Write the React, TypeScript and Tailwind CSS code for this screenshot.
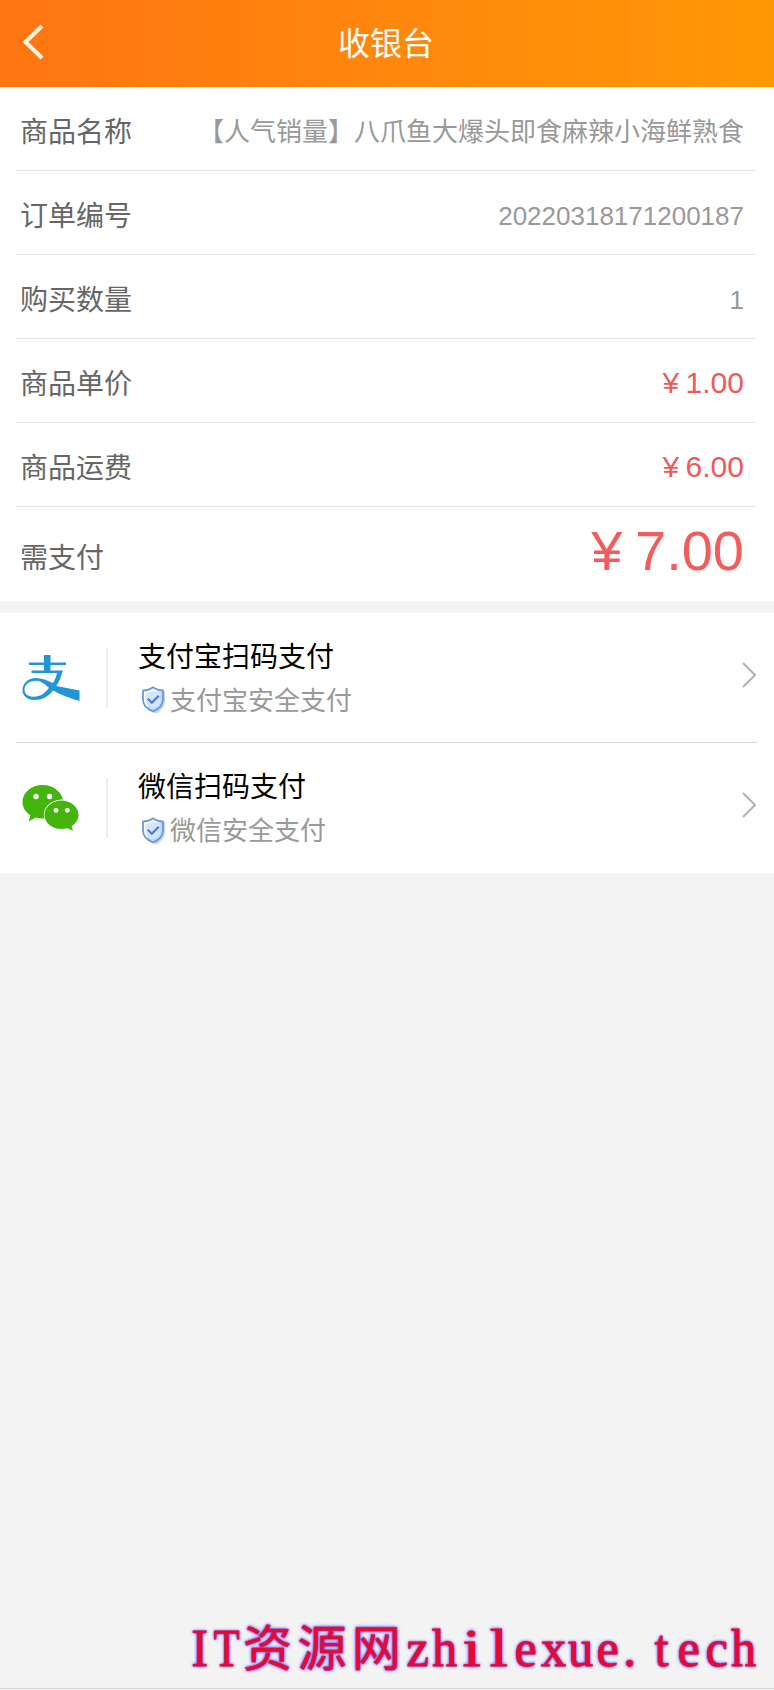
import clsx from 'clsx'

const details = [
  { label: '商品名称', value: '【人气销量】八爪鱼大爆头即食麻辣小海鲜熟食' },
  { label: '订单编号', value: '20220318171200187' },
  { label: '购买数量', value: '1' },
  { label: '商品单价', value: '¥ 1.00', isPrice: true },
  { label: '商品运费', value: '¥ 6.00', isPrice: true },
]

const methods = [
  { id: 'alipay', title: '支付宝扫码支付', note: '支付宝安全支付', Logo: AlipayLogo },
  { id: 'wechat', title: '微信扫码支付', note: '微信安全支付', Logo: WechatLogo },
]

function AlipayLogo() {
  return (
    <svg width="58" height="48" viewBox="0 0 58 48" fill="#2196d3">
      <path d="M22 1h6.500v7.500h15.500v2.500H28.500v5.500H41l-3 8.500c-1 2.500-2.200 4.800-3.700 6.900L57.500 36.500V47c-10-2.500-19-6.500-26.500-10.500C26 43 19.500 46 12.500 46 5 46 .5 41.500.5 36c0-7 6-12 13-12 6.500 0 12 2.500 17.500 5 2.200-3.500 3.300-6.500 4-10H9.500V16.500H22V11H7V8.500h15zM14 26.700c-7 0-11.500 4-11.500 9 0 4.500 4 7 9.500 7 6.500 0 11.500-4 15-9-4-3.500-8-7-13-7z" />
    </svg>
  )
}

function WechatLogo() {
  return (
    <svg width="58" height="48" viewBox="0 0 58 48" fill="#44b50c">
      <path d="M20.500 1C9.500 1 .5 8.500.5 18c0 5.500 3 10 7.800 13.200L6.800 37.500l7-4c2.500.8 4.700 1 7.700 1h1C19.500 24 29 15.500 41 15.500 39 7 30.500 1 20.500 1z" />
      <path d="M56.500 31c0-8-7.700-14.500-17-14.500s-17 6.500-17 14.500 7.700 14 17 14c2 0 4-.2 6-.8l5.500 2.500-1.300-4.700c4.300-2.700 6.800-6.500 6.800-11z" />
      <g fill="white">
        <circle cx="14" cy="12.500" r="2.700" />
        <circle cx="27.500" cy="12.500" r="2.700" />
        <circle cx="34" cy="26.300" r="2.400" />
        <circle cx="45.300" cy="26.300" r="2.400" />
      </g>
    </svg>
  )
}

function ShieldIcon() {
  return (
    <svg width="26" height="28" viewBox="0 0 26 28" fill="none" className="-mt-0.5 shrink-0">
      <path d="M13 7l10-1v9c0 6-4 9-8 11.500-3-1-6-3-7.500-5.500z" fill="#bcd9ff" stroke="#bcd9ff" strokeWidth="2" />
      <path d="M12 1.300c3 2.300 6.200 3.200 10 3.200v9c0 6-4 9.500-10 12-6-2.500-10-6-10-12v-9c3.800 0 7-.9 10-3.200z" stroke="#6f96da" strokeWidth="1.800" strokeLinejoin="round" />
      <path d="M12 4.500c2.200 1.400 4.500 2.200 7.500 2.500v6.500c0 4.500-3 7-7.500 9-4.500-2-7.500-4.500-7.500-9V7c3-.3 5.300-1.100 7.500-2.500z" fill="#d3e6ff" />
      <path d="M6.800 12.800l4 4 7-7" stroke="#4c7ccd" strokeWidth="2.200" />
    </svg>
  )
}

// Every latin letter takes half the width of a CJK one
function letterClass(char: string) {
  if (char > '~') return "w-[54.4px] justify-center font-['Noto_Sans_CJK_SC',sans-serif] text-[49px] [-webkit-text-stroke:0.6px_#e60a32]"
  if (char === 'T') return 'w-[27.2px] justify-center scale-x-80'
  if (char === '.') return 'w-[27.2px] justify-start pl-0.5'
  if (char === 'i' || char === 'l') return 'w-[27.2px] justify-center scale-x-125'
  return 'w-[27.2px] justify-center scale-x-95'
}

function Watermark() {
  return (
    <div className="flex h-[64px] items-baseline whitespace-nowrap font-['Liberation_Serif','Noto_Sans_CJK_SC',serif] text-[53px] leading-[64px] text-[#e60a32] [-webkit-text-stroke:0.8px_#e60a32] [text-shadow:0_0_2px_#5a4dff,0_0_3px_#6a5dff,0_0_4px_#7a70ff]">
      {Array.from('IT资源网zhilexue.tech').map((char, i) => (
        <span key={i} className={clsx('flex shrink-0', letterClass(char))}>
          {char}
        </span>
      ))}
    </div>
  )
}

export default function App() {
  return (
    <div className="flex h-[1690px] w-[774px] flex-col overflow-hidden bg-[#f3f3f3] font-['Liberation_Sans','Noto_Sans_CJK_SC',sans-serif]">
      <header className="grid h-[87px] shrink-0 grid-cols-[80px_1fr_80px] items-center bg-gradient-to-r from-[#ff7512] to-[#ff9805] text-white">
        <svg width="22" height="36" viewBox="0 0 22 36" fill="none" className="ml-[22px] -mt-1">
          <path d="M20 2L3.500 18 20 34" stroke="#fff6e6" strokeWidth="4" />
        </svg>
        <h1 className="pr-0.5 text-center text-[32px] leading-[40px]">收银台</h1>
      </header>

      <section className="h-[514px] shrink-0 bg-white pr-[18px] pl-4">
        {details.map(({ label, value, isPrice }) => (
          <div
            key={label}
            className="flex h-[84px] items-center justify-between border-b border-[#e8e8e8] pt-[9px] pr-3 pl-1"
          >
            <span className="text-[28px] text-[#666]">{label}</span>
            <span
              className={clsx(
                'whitespace-nowrap',
                isPrice ? 'pb-[5px] text-[30px] text-[#ee5a5a] [word-spacing:-2px]' : 'pb-0.5 text-[26px] text-[#999]'
              )}
            >
              {value}
            </span>
          </div>
        ))}
        <div className="flex h-[94px] items-center justify-between pr-3 pl-1">
          <span className="pt-2.5 text-[28px] text-[#666]">需支付</span>
          <span className="pb-1.5 text-[56px] leading-none text-[#f25c5a] [word-spacing:-3px]">¥ 7.00</span>
        </div>
      </section>

      <section className="mt-3 shrink-0 bg-white pr-[17px] pl-4">
        {methods.map(({ id, title, note, Logo }) => (
          <div key={id} className="flex h-[130px] items-center border-[#d5d5d5] not-last:border-b">
            <div className="w-[90px] pl-[5.5px]">
              <Logo />
            </div>
            <div className="h-[60px] w-0.5 bg-[#ececec]" />
            <div className="ml-[30px] flex-1 pt-[3px]">
              <p className="text-[28px] leading-[44px] text-black">{title}</p>
              <div className="flex items-center gap-[3px] pl-[3px] text-[26px] leading-[43px] text-[#999]">
                <ShieldIcon />
                <span>{note}</span>
              </div>
            </div>
            <svg width="16" height="28" viewBox="0 0 16 28" fill="none" className="-mt-1.5">
              <path d="M2 2l12 12L2 26" stroke="#b2b2b2" strokeWidth="2" />
            </svg>
          </div>
        ))}
      </section>

      <footer className="mt-auto mb-px flex h-[76px] shrink-0 justify-end border-b border-[#d5d5d5] pr-[17px]">
        <Watermark />
      </footer>
    </div>
  )
}
